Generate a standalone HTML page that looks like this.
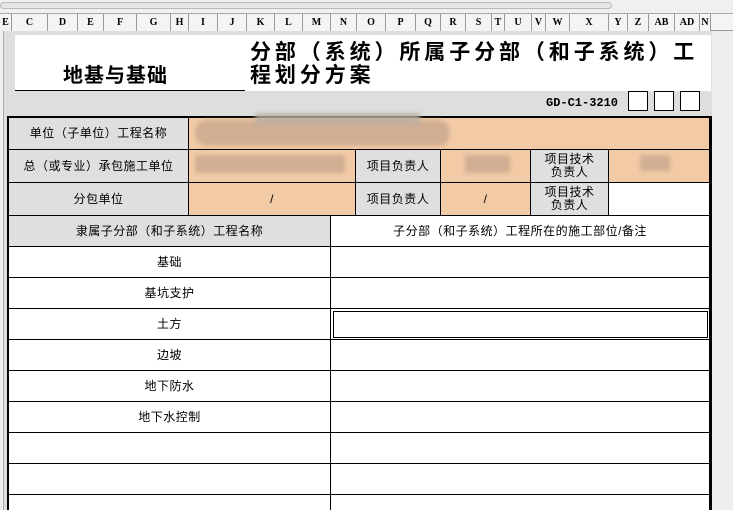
<!DOCTYPE html><html style="width:733px;height:510px;overflow:hidden"><head><meta charset="utf-8"><style>
*{margin:0;padding:0;box-sizing:border-box}
body{width:733px;height:510px;overflow:hidden;background:#dedede;position:relative;font-family:"Liberation Sans","Noto Sans CJK SC",sans-serif;font-size:12px;color:#000}
.a{position:absolute}
.hd{position:absolute;top:14px;height:17px;border-right:1px solid #999;font-family:"Liberation Serif",serif;font-size:10px;font-weight:bold;text-align:center;line-height:17px;background:#f4f4f4}
.c{position:absolute;display:flex;align-items:center;justify-content:center;text-align:center;line-height:13px;border-right:1px solid #000;border-bottom:1px solid #000;letter-spacing:0.5px}
.g{background:#dfdfdf}.o{background:#f3caa6}.w{background:#fff}
.bl{position:absolute;background:#c9a88e;filter:blur(2px);opacity:.8}
</style></head><body>
<div class="a" style="left:0;top:0;width:733px;height:14px;background:#f0f0f0;border-bottom:1px solid #aaa"></div>
<div class="a" style="left:0;top:2px;width:612px;height:7px;background:#e6e6e6;border:1px solid #bbb;border-radius:4px"></div>
<div class="a" style="left:0;top:14px;width:733px;height:17px;background:#f4f4f4;border-bottom:1px solid #999"></div>
<div class="hd" style="left:0;width:12px">E</div><div class="hd" style="left:12px;width:36px">C</div><div class="hd" style="left:48px;width:30px">D</div><div class="hd" style="left:78px;width:26px">E</div><div class="hd" style="left:104px;width:33px">F</div><div class="hd" style="left:137px;width:34px">G</div><div class="hd" style="left:171px;width:18px">H</div><div class="hd" style="left:189px;width:29px">I</div><div class="hd" style="left:218px;width:29px">J</div><div class="hd" style="left:247px;width:28px">K</div><div class="hd" style="left:275px;width:28px">L</div><div class="hd" style="left:303px;width:28px">M</div><div class="hd" style="left:331px;width:26px">N</div><div class="hd" style="left:357px;width:29px">O</div><div class="hd" style="left:386px;width:30px">P</div><div class="hd" style="left:416px;width:25px">Q</div><div class="hd" style="left:441px;width:25px">R</div><div class="hd" style="left:466px;width:26px">S</div><div class="hd" style="left:492px;width:13px">T</div><div class="hd" style="left:505px;width:27px">U</div><div class="hd" style="left:532px;width:14px">V</div><div class="hd" style="left:546px;width:24px">W</div><div class="hd" style="left:570px;width:39px">X</div><div class="hd" style="left:609px;width:19px">Y</div><div class="hd" style="left:628px;width:21px">Z</div><div class="hd" style="left:649px;width:26px">AB</div><div class="hd" style="left:675px;width:25px">AD</div><div class="hd" style="left:700px;width:11px">N</div>
<div class="a" style="left:0;top:31px;width:4px;height:479px;background:#f0f0f0;border-right:1px solid #aaa"></div>
<div class="a" style="left:712px;top:31px;width:21px;height:479px;background:#eeeeee"></div>
<div class="a" style="left:15px;top:35px;width:696px;height:56px;background:#fff"></div>
<div class="a" style="left:15px;top:90px;width:230px;height:1px;background:#000"></div>
<div class="a" style="left:63px;top:64px;font-size:20px;font-weight:bold;line-height:24px;letter-spacing:1px">地基与基础</div>
<div class="a" style="left:250px;top:41px;width:470px;font-size:21px;font-weight:bold;line-height:23px;letter-spacing:3.9px;white-space:nowrap">分部（系统）所属子分部（和子系统）工<br>程划分方案</div>
<div class="a" style="left:546px;top:96px;font-family:'Liberation Mono',monospace;font-weight:bold;font-size:12px">GD-C1-3210</div>
<div class="a" style="left:628px;top:91px;width:20px;height:20px;background:#fff;border:1px solid #000"></div>
<div class="a" style="left:654px;top:91px;width:20px;height:20px;background:#fff;border:1px solid #000"></div>
<div class="a" style="left:680px;top:91px;width:20px;height:20px;background:#fff;border:1px solid #000"></div>
<div class="a" style="left:7px;top:116px;width:705px;height:394px;background:#fff;border:2px solid #000;border-bottom:none"></div>
<div class="c g" style="left:9px;top:118px;width:180px;height:32px">单位（子单位）工程名称</div>
<div class="c o" style="left:189px;top:118px;width:521px;height:32px"></div>
<div class="c g" style="left:9px;top:150px;width:180px;height:33px">总（或专业）承包施工单位</div>
<div class="c o" style="left:189px;top:150px;width:167px;height:33px"></div>
<div class="c g" style="left:356px;top:150px;width:85px;height:33px">项目负责人</div>
<div class="c o" style="left:441px;top:150px;width:90px;height:33px"></div>
<div class="c g" style="left:531px;top:150px;width:78px;height:33px">项目技术<br>负责人</div>
<div class="c o" style="left:609px;top:150px;width:101px;height:33px"></div>
<div class="c g" style="left:9px;top:183px;width:180px;height:33px">分包单位</div>
<div class="c o" style="left:189px;top:183px;width:167px;height:33px">/</div>
<div class="c g" style="left:356px;top:183px;width:85px;height:33px">项目负责人</div>
<div class="c o" style="left:441px;top:183px;width:90px;height:33px">/</div>
<div class="c g" style="left:531px;top:183px;width:78px;height:33px">项目技术<br>负责人</div>
<div class="c w" style="left:609px;top:183px;width:101px;height:33px"></div>
<div class="c g" style="left:9px;top:216px;width:322px;height:31px">隶属子分部（和子系统）工程名称</div>
<div class="c w" style="left:331px;top:216px;width:379px;height:31px">子分部（和子系统）工程所在的施工部位/备注</div>
<div class="c w" style="left:9px;top:247px;width:322px;height:31px">基础</div><div class="c w" style="left:331px;top:247px;width:379px;height:31px"></div>
<div class="c w" style="left:9px;top:278px;width:322px;height:31px">基坑支护</div><div class="c w" style="left:331px;top:278px;width:379px;height:31px"></div>
<div class="c w" style="left:9px;top:309px;width:322px;height:31px">土方</div><div class="c w" style="left:331px;top:309px;width:379px;height:31px;outline:1px solid #000;outline-offset:-3px"></div>
<div class="c w" style="left:9px;top:340px;width:322px;height:31px">边坡</div><div class="c w" style="left:331px;top:340px;width:379px;height:31px"></div>
<div class="c w" style="left:9px;top:371px;width:322px;height:31px">地下防水</div><div class="c w" style="left:331px;top:371px;width:379px;height:31px"></div>
<div class="c w" style="left:9px;top:402px;width:322px;height:31px">地下水控制</div><div class="c w" style="left:331px;top:402px;width:379px;height:31px"></div>
<div class="c w" style="left:9px;top:433px;width:322px;height:31px"></div><div class="c w" style="left:331px;top:433px;width:379px;height:31px"></div>
<div class="c w" style="left:9px;top:464px;width:322px;height:31px"></div><div class="c w" style="left:331px;top:464px;width:379px;height:31px"></div>
<div class="c w" style="left:9px;top:495px;width:322px;height:15px;border-bottom:none"></div><div class="c w" style="left:331px;top:495px;width:379px;height:15px;border-bottom:none"></div>
<div class="bl" style="left:195px;top:120px;width:255px;height:26px;border-radius:12px"></div>
<div class="bl" style="left:255px;top:113px;width:165px;height:12px;background:#b8ada2"></div>
<div class="bl" style="left:195px;top:155px;width:150px;height:18px"></div>
<div class="bl" style="left:465px;top:155px;width:45px;height:18px"></div>
<div class="bl" style="left:640px;top:155px;width:30px;height:16px"></div>
</body></html>
